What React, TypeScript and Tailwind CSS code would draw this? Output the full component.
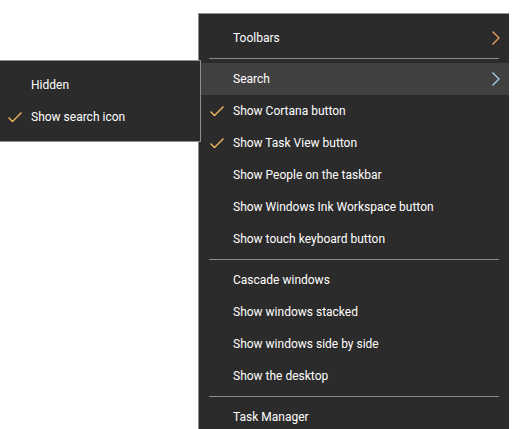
const font = "font-['Roboto','Noto_Sans',sans-serif]";

function Check({ left }: { left: string }) {
  return (
    <svg width="15" height="11" viewBox="0 0 15 11" fill="none" className={`absolute top-[11px] ${left}`}>
      <path d="M0.5 5.5 L4.5 9.5 L13.5 0.5" stroke="#f7bc5e" strokeWidth="1.25" />
    </svg>
  );
}

function Chevron({ active }: { active: boolean }) {
  return (
    <svg width="10" height="14" viewBox="0 0 10 14" fill="none" className="absolute right-[8px] top-[9px]">
      <path d="M1.5 0.5 L8 7 L1.5 13.5" stroke={active ? '#a8d4ea' : '#f2a45c'} strokeWidth="1.25" />
    </svg>
  );
}

type RowProps = {
  label: string;
  checked?: boolean;
  submenu?: boolean;
  active?: boolean;
  pad: string;
  checkLeft?: string;
};

function Row({ label, checked, submenu, active, pad, checkLeft = 'left-[11px]' }: RowProps) {
  return (
    <div className={`relative flex h-8 items-center text-xs text-white ${pad} ${active ? 'bg-[#414141]' : ''}`}>
      {checked && <Check left={checkLeft} />}
      <span>{label}</span>
      {submenu && <Chevron active={!!active} />}
    </div>
  );
}

function Separator() {
  return <div className="mx-[10px] my-1 h-px bg-[#8a8a8a]" />;
}

export default function App() {
  const pad = 'pl-[34px]';
  return (
    <div className={`relative h-[429px] w-[518px] overflow-hidden bg-white ${font}`}>
      <div className="absolute left-[198px] top-[13px] w-[311px] border-l border-t border-[#8f8f8f] bg-[#2b2b2b] pt-2">
        <Row label="Toolbars" submenu pad={pad} />
        <Separator />
        <Row label="Search" submenu active pad={pad} />
        <Row label="Show Cortana button" checked pad={pad} />
        <Row label="Show Task View button" checked pad={pad} />
        <Row label="Show People on the taskbar" pad={pad} />
        <Row label="Show Windows Ink Workspace button" pad={pad} />
        <Row label="Show touch keyboard button" pad={pad} />
        <Separator />
        <Row label="Cascade windows" pad={pad} />
        <Row label="Show windows stacked" pad={pad} />
        <Row label="Show windows side by side" pad={pad} />
        <Row label="Show the desktop" pad={pad} />
        <Separator />
        <Row label="Task Manager" pad={pad} />
      </div>
      <div className="absolute left-0 top-[60px] w-[201px] border-b border-r border-t border-[#8f8f8f] bg-[#2b2b2b] py-2">
        <Row label="Hidden" pad="pl-[31px]" />
        <Row label="Show search icon" checked pad="pl-[31px]" checkLeft="left-[8px]" />
      </div>
    </div>
  );
}
